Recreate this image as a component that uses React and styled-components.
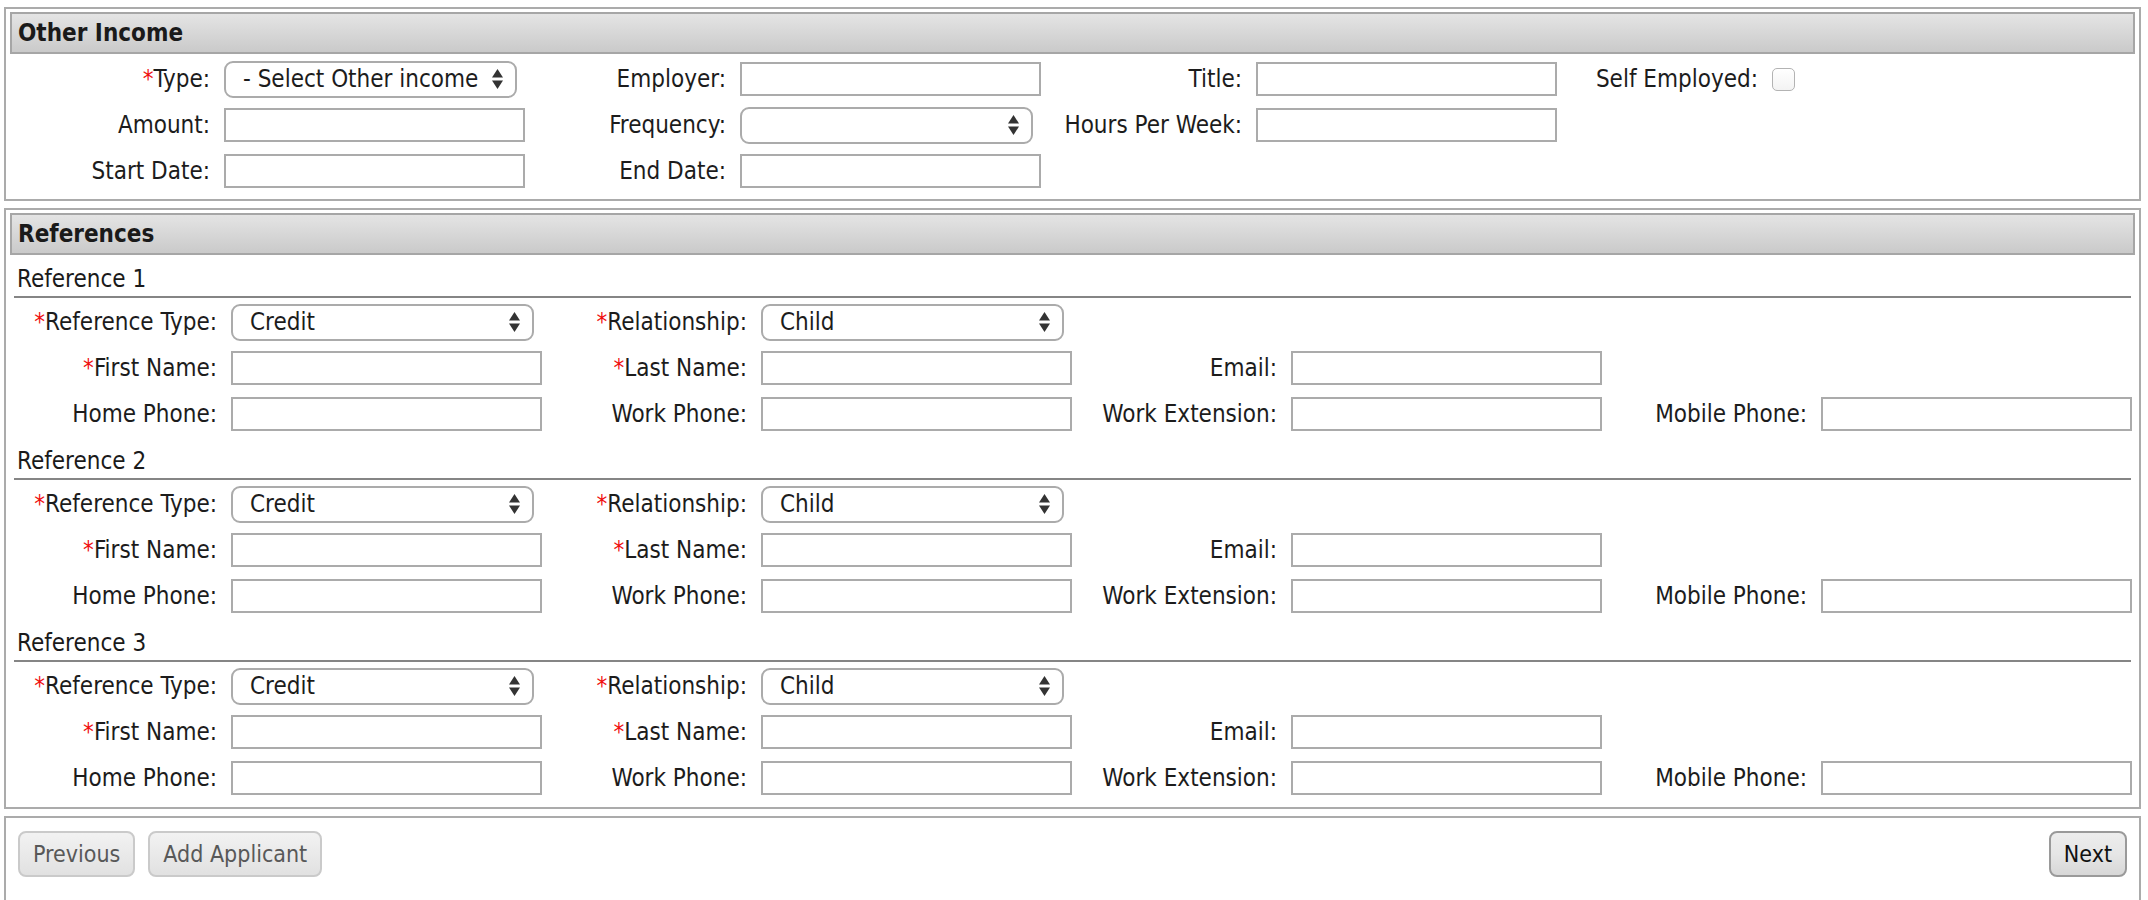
import React from "react";
import styled, { createGlobalStyle } from "styled-components";

const FONT = `"DejaVu Sans Condensed", "Liberation Sans", sans-serif`;

const GlobalStyle = createGlobalStyle`
  html, body { margin: 0; padding: 0; background: #fff; }
  body {
    font-family: ${FONT};
    font-size: 24px;
    color: #1c1c1c;
    -webkit-font-smoothing: antialiased;
  }
  * { box-sizing: border-box; }
`;

const Page = styled.div`
  display: flex;
  flex-direction: column;
  gap: 7px;
  padding: 7px 7px 0 4px;
`;

const Panel = styled.section`
  border: 2px solid #ababab;
  padding: ${(p) => p.$pad || "3px 4px 5px"};
`;

const Header = styled.h2`
  margin: 0;
  height: 42px;
  line-height: 38px;
  padding-left: 6px;
  border: 2px solid #a6a6a6;
  background: linear-gradient(#e4e4e4, #cacaca);
  font-size: 24px;
  font-weight: bold;
  color: #1a1a1a;
`;

const FieldGrid = styled.div`
  display: grid;
  grid-template-columns: repeat(4, ${(p) => p.$label}px ${(p) => p.$input}px);
  grid-auto-rows: 46px;
  column-gap: 14px;
  align-items: center;
  padding-left: ${(p) => p.$indent}px;
  margin-top: ${(p) => p.$top || 0}px;
`;

const Label = styled.label`
  justify-self: end;
  white-space: nowrap;
  color: #1c1c1c;
`;

const Req = styled.span`
  color: #f01010;
`;

const TextInput = styled.input`
  width: ${(p) => p.$w}px;
  height: 34px;
  border: 2px solid #ababab;
  border-radius: 0;
  background: #fff;
  font: inherit;
  padding: 0 6px;
  outline: none;
`;

const SelectWrap = styled.div`
  position: relative;
  width: ${(p) => p.$w}px;
  height: 37px;
`;

const Select = styled.select`
  appearance: none;
  -webkit-appearance: none;
  width: 100%;
  height: 100%;
  border: 2px solid #ababab;
  border-radius: 9px;
  background: #fff;
  font: inherit;
  color: #1c1c1c;
  padding: 0 28px 0 17px;
  outline: none;
`;

const Arrows = styled.svg`
  position: absolute;
  right: 14px;
  top: 50%;
  transform: translateY(-50%);
  pointer-events: none;
`;

const Checkbox = styled.span`
  display: block;
  width: 23px;
  height: 23px;
  border: 1.5px solid #b3b3b3;
  border-radius: 5px;
  background: linear-gradient(#ffffff, #f3f3f3);
`;

const RefBlock = styled.div`
  margin: 0 4px;
`;

const RefTitle = styled.div`
  padding: 10px 0 2px 3px;
  line-height: 29px;
  border-bottom: 2px solid #858585;
  color: #1a1a1a;
`;

const ButtonBar = styled.div`
  display: flex;
  justify-content: space-between;
  align-items: center;
`;

const ButtonGroup = styled.div`
  display: flex;
  gap: 13px;
`;

const Button = styled.button`
  height: 46px;
  padding: 0 13px;
  border-radius: 8px;
  font-family: inherit;
  font-size: 23px;
  border: 2px solid ${(p) => (p.disabled ? "#cacaca" : "#9a9a9a")};
  color: ${(p) => (p.disabled ? "#585858" : "#111")};
  background: ${(p) =>
    p.disabled
      ? "linear-gradient(#f2f2f2, #e1e1e1)"
      : "linear-gradient(#ededed 0%, #e6e6e6 50%, #d7d7d7 100%)"};
`;

function SelectBox({ w, value }) {
  return (
    <SelectWrap $w={w}>
      <Select defaultValue={value}>
        <option value={value}>{value}</option>
      </Select>
      <Arrows width="11" height="20" viewBox="0 0 11 20">
        <polygon points="5.5,0 11,8.5 0,8.5" fill="#333" />
        <polygon points="0,11.5 11,11.5 5.5,20" fill="#333" />
      </Arrows>
    </SelectWrap>
  );
}

function FieldLabel({ children, required }) {
  return (
    <Label>
      {required && <Req>*</Req>}
      {children}
    </Label>
  );
}

function Reference({ n }) {
  const IW = 311;
  const SW = 303;
  return (
    <RefBlock>
      <RefTitle>Reference {n}</RefTitle>
      <FieldGrid $label={191} $input={IW} $indent={12} $top={1}>
        <FieldLabel required>Reference Type:</FieldLabel>
        <SelectBox w={SW} value="Credit" />
        <FieldLabel required>Relationship:</FieldLabel>
        <SelectBox w={SW} value="Child" />
        <span />
        <span />
        <span />
        <span />

        <FieldLabel required>First Name:</FieldLabel>
        <TextInput $w={IW} />
        <FieldLabel required>Last Name:</FieldLabel>
        <TextInput $w={IW} />
        <FieldLabel>Email:</FieldLabel>
        <TextInput $w={IW} />
        <span />
        <span />

        <FieldLabel>Home Phone:</FieldLabel>
        <TextInput $w={IW} />
        <FieldLabel>Work Phone:</FieldLabel>
        <TextInput $w={IW} />
        <FieldLabel>Work Extension:</FieldLabel>
        <TextInput $w={IW} />
        <FieldLabel>Mobile Phone:</FieldLabel>
        <TextInput $w={IW} />
      </FieldGrid>
    </RefBlock>
  );
}

export default function App() {
  const IW = 301;
  const SW = 293;
  return (
    <>
      <GlobalStyle />
      <Page>
        <Panel>
          <Header>Other Income</Header>
          <FieldGrid $label={187} $input={IW} $indent={13} $top={2}>
            <FieldLabel required>Type:</FieldLabel>
            <SelectBox w={SW} value="- Select Other income" />
            <FieldLabel>Employer:</FieldLabel>
            <TextInput $w={IW} />
            <FieldLabel>Title:</FieldLabel>
            <TextInput $w={IW} />
            <FieldLabel>Self Employed:</FieldLabel>
            <Checkbox />

            <FieldLabel>Amount:</FieldLabel>
            <TextInput $w={IW} />
            <FieldLabel>Frequency:</FieldLabel>
            <SelectBox w={SW} value="" />
            <FieldLabel>Hours Per Week:</FieldLabel>
            <TextInput $w={IW} />
            <span />
            <span />

            <FieldLabel>Start Date:</FieldLabel>
            <TextInput $w={IW} />
            <FieldLabel>End Date:</FieldLabel>
            <TextInput $w={IW} />
          </FieldGrid>
        </Panel>

        <Panel $pad="3px 4px 6px">
          <Header>References</Header>
          <Reference n={1} />
          <Reference n={2} />
          <Reference n={3} />
        </Panel>

        <Panel $pad="13px 12px 40px">
          <ButtonBar>
            <ButtonGroup>
              <Button disabled>Previous</Button>
              <Button disabled>Add Applicant</Button>
            </ButtonGroup>
            <Button>Next</Button>
          </ButtonBar>
        </Panel>
      </Page>
    </>
  );
}
